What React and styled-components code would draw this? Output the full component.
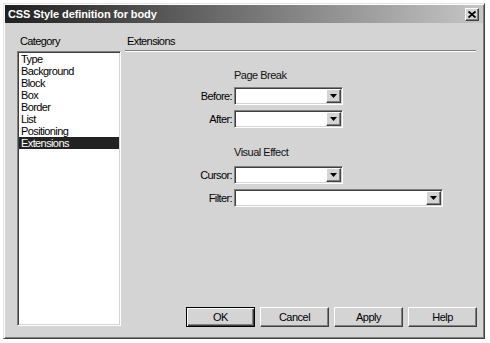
import React from 'react'
import styled, { createGlobalStyle, css } from 'styled-components'

const GlobalStyle = createGlobalStyle`
  html, body {
    margin: 0;
    padding: 0;
    background: #fff;
  }
  body {
    font-family: 'Liberation Sans', Arial, sans-serif;
    font-size: 11px;
    color: #000;
  }
`

const raised = css`
  background: #d4d4d4;
  border: 1px solid;
  border-color: #fff #404040 #404040 #fff;
  box-shadow: inset -1px -1px #808080;
`

const sunken = css`
  border: 1px solid;
  border-color: #808080 #fff #fff #808080;
  box-shadow: inset 1px 1px #404040, inset -1px -1px #d4d4d4;
`

const Window = styled.div`
  box-sizing: border-box;
  width: 482px;
  height: 336px;
  margin: 3px 0 0 3px;
  padding: 1px;
  background: #d4d4d4;
  border: 1px solid;
  border-color: #e4e4e4 #404040 #404040 #e4e4e4;
  box-shadow: inset 1px 1px #fff, inset -1px -1px #808080;
  display: flex;
  flex-direction: column;
`

const TitleBar = styled.div`
  height: 18px;
  flex: none;
  display: flex;
  align-items: center;
  justify-content: space-between;
  padding: 0 4px 0 3px;
  background: linear-gradient(to right, #202020, #5a5a5a 35%, #c6c6c6);
`

const Title = styled.span`
  color: #fff;
  font-weight: bold;
  font-size: 11px;
  letter-spacing: -0.1px;
`

const CloseButton = styled.div`
  ${raised};
  box-sizing: border-box;
  width: 14px;
  height: 13px;
  display: flex;
  align-items: center;
  justify-content: center;
`

const Body = styled.div`
  flex: 1;
  display: flex;
  padding: 12px 6px 11px 12px;
`

const LeftColumn = styled.div`
  width: 104px;
  display: flex;
  flex-direction: column;
`

const RightColumn = styled.div`
  flex: 1;
  margin-left: 4px;
  display: flex;
  flex-direction: column;
`

const SectionLabel = styled.div`
  height: 13px;
  line-height: 13px;
  padding-left: ${p => p.$indent || 3}px;
  letter-spacing: -0.6px;
`

const ListBox = styled.div`
  ${sunken};
  flex: 1;
  margin-top: 3px;
  background: #fff;
  padding: 1px;
`

const ListItem = styled.div`
  height: 12px;
  line-height: 12px;
  padding-left: 2px;
  letter-spacing: -0.6px;
  ${p => p.$selected && css`
    background: #222;
    color: #fff;
  `}
`

const Rule = styled.div`
  margin: 2px 1px 0 0;
  border-top: 1px solid #808080;
  border-bottom: 1px solid #fff;
`

const Form = styled.div`
  margin-top: 17px;
  display: flex;
  flex-direction: column;
`

const GroupHeading = styled.div`
  height: 13px;
  line-height: 13px;
  padding-left: 109px;
  margin-top: ${p => p.$gap || 0}px;
  letter-spacing: -0.5px;
  color: #111;
`

const Field = styled.div`
  display: flex;
  align-items: center;
  margin-top: ${p => p.$gap}px;
`

const FieldLabel = styled.label`
  width: 107px;
  margin-right: 2px;
  text-align: right;
  letter-spacing: -0.6px;
`

const Select = styled.div`
  ${sunken};
  box-sizing: border-box;
  width: ${p => p.$width}px;
  height: 18px;
  padding: 1px;
  background: #fff;
  display: flex;
  justify-content: flex-end;
`

const DropButton = styled.div`
  ${raised};
  box-sizing: border-box;
  width: 15px;
  height: 14px;
  display: flex;
  align-items: center;
  justify-content: center;
`

const Spacer = styled.div`
  flex: 1;
`

const ButtonRow = styled.div`
  display: flex;
  justify-content: flex-end;
  gap: 5px;
  margin-bottom: -1px;
`

const Button = styled.div`
  ${raised};
  box-sizing: border-box;
  width: 69px;
  height: 20px;
  display: flex;
  align-items: center;
  justify-content: center;
  letter-spacing: -0.5px;
  ${p => p.$default && css`
    border-color: #000;
    box-shadow: inset 1px 1px #fff, inset -1px -1px #404040, inset -2px -2px #808080;
  `}
`

const Arrow = () => (
  <svg width="7" height="4" viewBox="0 0 7 4">
    <path d="M0 0h7L3.5 4z" fill="#000" />
  </svg>
)

const CloseIcon = () => (
  <svg width="8" height="7" viewBox="0 0 8 7">
    <path d="M0.5 0.5L7.5 6.5M7.5 0.5L0.5 6.5" stroke="#000" strokeWidth="1.8" />
  </svg>
)

const DropDown = ({ width }) => (
  <Select $width={width}>
    <DropButton>
      <Arrow />
    </DropButton>
  </Select>
)

const categories = [
  'Type',
  'Background',
  'Block',
  'Box',
  'Border',
  'List',
  'Positioning',
  'Extensions',
]

export default function App() {
  return (
    <>
      <GlobalStyle />
      <Window>
        <TitleBar>
          <Title>CSS Style definition for body</Title>
          <CloseButton>
            <CloseIcon />
          </CloseButton>
        </TitleBar>
        <Body>
          <LeftColumn>
            <SectionLabel>Category</SectionLabel>
            <ListBox>
              {categories.map(c => (
                <ListItem key={c} $selected={c === 'Extensions'}>
                  {c}
                </ListItem>
              ))}
            </ListBox>
          </LeftColumn>
          <RightColumn>
            <SectionLabel $indent={2}>Extensions</SectionLabel>
            <Rule />
            <Form>
              <GroupHeading>Page Break</GroupHeading>
              <Field $gap={5}>
                <FieldLabel>Before:</FieldLabel>
                <DropDown width={109} />
              </Field>
              <Field $gap={5}>
                <FieldLabel>After:</FieldLabel>
                <DropDown width={109} />
              </Field>
              <GroupHeading $gap={18}>Visual Effect</GroupHeading>
              <Field $gap={7}>
                <FieldLabel>Cursor:</FieldLabel>
                <DropDown width={109} />
              </Field>
              <Field $gap={5}>
                <FieldLabel>Filter:</FieldLabel>
                <DropDown width={209} />
              </Field>
            </Form>
            <Spacer />
            <ButtonRow>
              <Button $default>OK</Button>
              <Button>Cancel</Button>
              <Button>Apply</Button>
              <Button>Help</Button>
            </ButtonRow>
          </RightColumn>
        </Body>
      </Window>
    </>
  )
}
